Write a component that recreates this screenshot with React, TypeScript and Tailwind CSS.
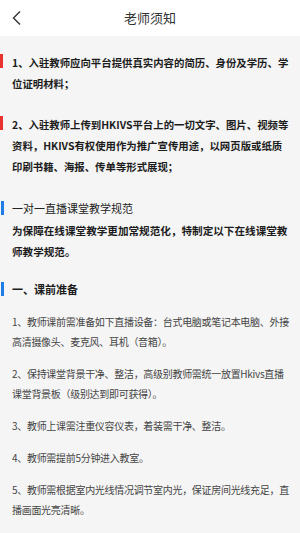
import { FC, ReactNode } from 'react';

const font = {
  fontFamily: '"Noto Sans CJK SC", "Noto Sans", Roboto, sans-serif',
};

const Bar: FC<{ color: 'red' | 'blue' }> = ({ color }) => (
  <span
    className={
      color === 'red'
        ? 'absolute left-0 top-[2px] w-[3px] h-[14px] bg-[#e8322e]'
        : 'absolute left-[1px] top-[3px] w-[3px] h-[14px] bg-[#1e7ee8]'
    }
  />
);

const Notice: FC<{ children: ReactNode; className?: string }> = ({ children, className }) => (
  <div className={`relative pl-[12px] pr-[10px] ${className ?? ''}`}>
    <Bar color="red" />
    <p className="text-[10.4px] leading-[21px] font-bold text-[#1c1c1c]">{children}</p>
  </div>
);

const Rule: FC<{ children: ReactNode }> = ({ children }) => (
  <p className="pl-[12px] pr-[8px] text-[10px] tracking-[-0.3px] leading-[20px] text-[#444]">
    {children}
  </p>
);

const rules = [
  '1、教师课前需准备如下直播设备：台式电脑或笔记本电脑、外接高清摄像头、麦克风、耳机（音箱）。',
  '2、保持课堂背景干净、整洁，高级别教师需统一放置Hkivs直播课堂背景板（级别达到即可获得）。',
  '3、教师上课需注重仪容仪表，着装需干净、整洁。',
  '4、教师需提前5分钟进入教室。',
  '5、教师需根据室内光线情况调节室内光，保证房间光线充足，直播画面光亮清晰。',
];

const App: FC = () => {
  return (
    <div className="w-[300px] h-[533px] overflow-hidden bg-[#f5f5f5] flex flex-col" style={font}>
      <div className="h-[36px] shrink-0 bg-white relative flex items-center justify-center">
        <svg
          className="absolute left-[11px] top-[10px]"
          width="12"
          height="16"
          viewBox="0 0 12 16"
          fill="none"
        >
          <polyline points="9,1.5 2.5,8 9,14.5" stroke="#333" strokeWidth="1.4" />
        </svg>
        <span className="text-[13px] text-[#333]">老师须知</span>
      </div>

      <div className="pt-[16px]">
        <Notice>1、入驻教师应向平台提供真实内容的简历、身份及学历、学位证明材料；</Notice>
        <Notice className="mt-[20px]">
          2、入驻教师上传到HKIVS平台上的一切文字、图片、视频等资料，HKIVS有权使用作为推广宣传用途，以网页版或纸质印刷书籍、海报、传单等形式展现；
        </Notice>

        <div className="relative mt-[21px] pl-[12px] pr-[10px]">
          <Bar color="blue" />
          <p className="text-[11px] leading-[21px] text-[#222]">一对一直播课堂教学规范</p>
          <p className="mt-[1px] text-[10.6px] leading-[21px] font-bold text-[#1c1c1c]">
            为保障在线课堂教学更加常规范化，特制定以下在线课堂教师教学规范。
          </p>
        </div>

        <div className="relative mt-[17px] pl-[12px] pr-[10px]">
          <Bar color="blue" />
          <p className="text-[11px] leading-[21px] font-bold text-[#1c1c1c]">一、课前准备</p>
        </div>

        <div className="mt-[12px] flex flex-col gap-[12px]">
          {rules.map((r, i) => (
            <Rule key={i}>{r}</Rule>
          ))}
        </div>
      </div>
    </div>
  );
};

export default App;
